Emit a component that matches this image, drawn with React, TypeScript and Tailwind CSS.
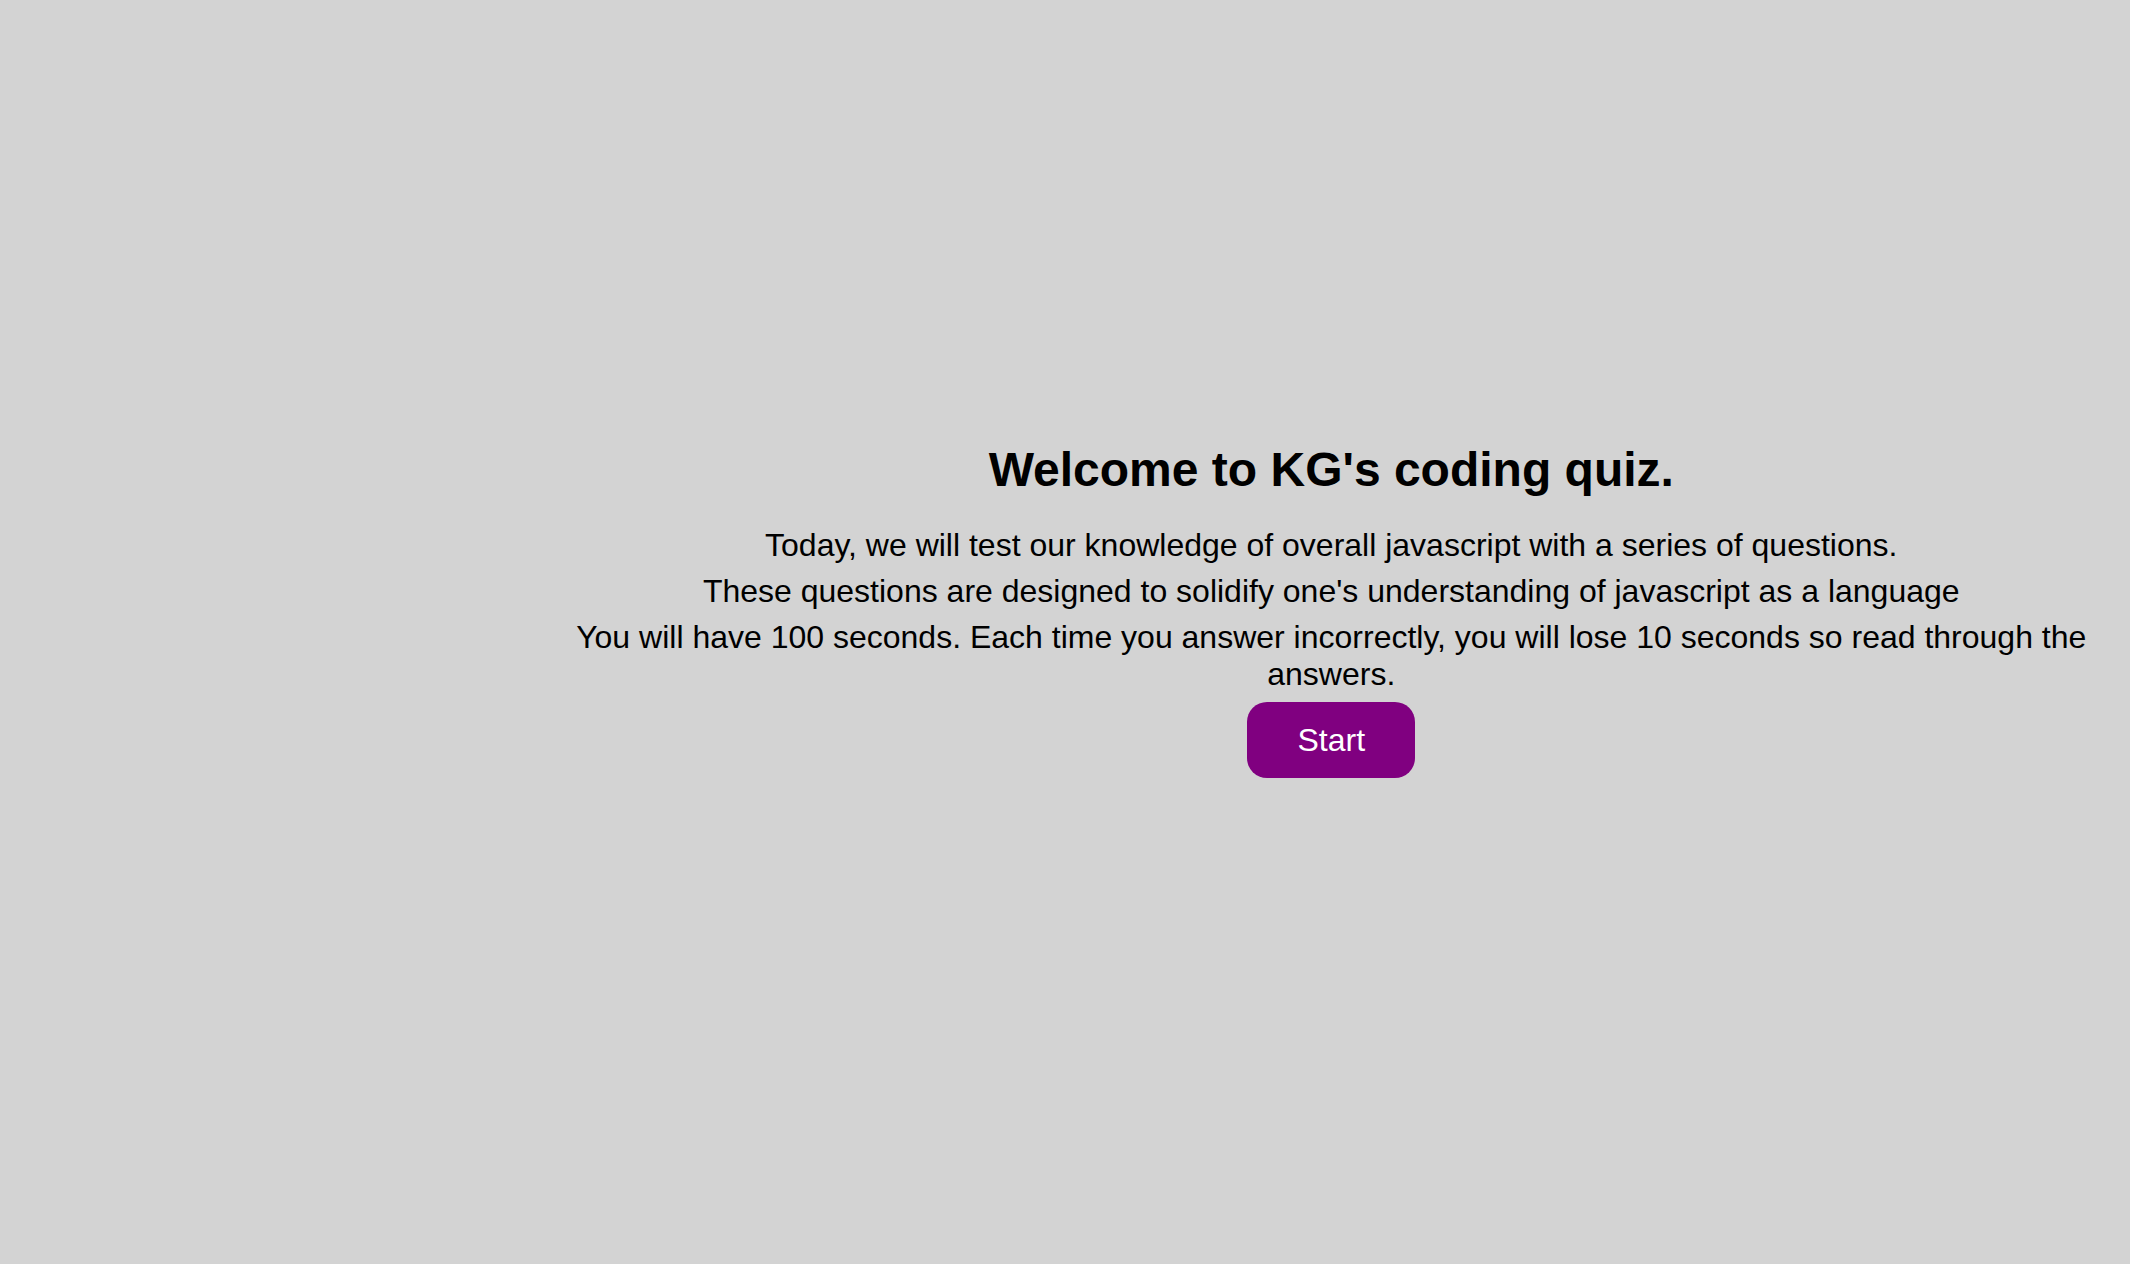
export default function App() {
  return (
    <div className="min-h-screen bg-[#d3d3d3] text-black font-['Liberation_Sans',Arial,sans-serif]">
      <div className="ml-[25%] w-3/4 pt-[442px] flex flex-col items-center text-center">
        <h1 className="text-[48px] leading-[1.15] font-bold mb-[30px]">
          Welcome to KG's coding quiz.
        </h1>
        <p className="text-[32px] leading-[1.15]">
          Today, we will test our knowledge of overall javascript with a series of questions.
        </p>
        <p className="text-[32px] leading-[1.15] mt-[9px]">
          These questions are designed to solidify one's understanding of javascript as a language
        </p>
        <p className="text-[32px] leading-[1.15] mt-[9px]">
          You will have 100 seconds. Each time you answer incorrectly, you will lose 10 seconds so read through the answers.
        </p>
        <button className="mt-[10px] bg-[#800080] text-white text-[32px] leading-[1.15] px-[50px] py-[19.5px] rounded-[20px]">
          Start
        </button>
      </div>
    </div>
  );
}
